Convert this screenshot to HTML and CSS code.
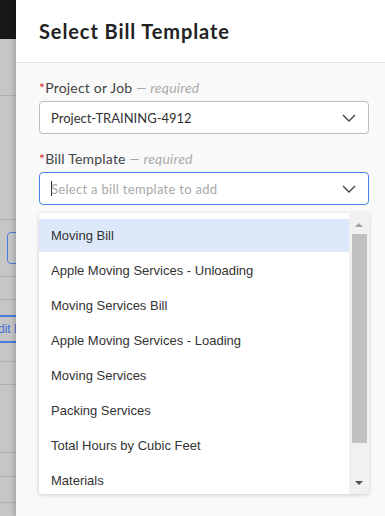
FILE: index.html
```html
<!DOCTYPE html>
<html lang="en">
<head>
  <title>Select Bill Template</title>
  <link rel="stylesheet" href="styles.css">
</head>
<body>
  <div class="backdrop">
    <div class="bd-top"></div>
    <div class="bd-row" style="height:57px"></div>
    <div class="bd-row" style="height:124px"></div>
    <div class="bd-row bd-btn-row" style="height:57px"><span class="bd-btn"></span></div>
    <div class="bd-row" style="height:23px"></div>
    <div class="bd-row bd-edit-row" style="height:62px"><span class="bd-edit">dit B</span></div>
    <div class="bd-row" style="height:23px"></div>
    <div class="bd-row" style="height:68px"></div>
    <div class="bd-row" style="height:24px"></div>
    <div class="bd-row" style="height:26px"></div>
  </div>

  <div class="modal">
    <div class="modal-header">
      <h2>Select Bill Template</h2>
    </div>
    <div class="modal-body">
      <div class="form-group">
        <label><span class="req">*</span>Project or Job <span class="hint">— required</span></label>
        <div class="select">
          <span class="value">Project-TRAINING-4912</span>
          <svg class="chevron" width="14" height="8" viewBox="0 0 14 8"><path d="M1 1l6 6 6-6" fill="none" stroke="#444" stroke-width="1.4"/></svg>
        </div>
      </div>
      <div class="form-group">
        <label><span class="req">*</span>Bill Template <span class="hint">— required</span></label>
        <div class="select focused">
          <span class="caret"></span>
          <span class="placeholder">Select a bill template to add</span>
          <svg class="chevron" width="14" height="8" viewBox="0 0 14 8"><path d="M1 1l6 6 6-6" fill="none" stroke="#444" stroke-width="1.4"/></svg>
        </div>
      </div>
      <div class="dropdown">
        <ul class="options">
          <li class="active">Moving Bill</li>
          <li>Apple Moving Services - Unloading</li>
          <li>Moving Services Bill</li>
          <li>Apple Moving Services - Loading</li>
          <li>Moving Services</li>
          <li>Packing Services</li>
          <li>Total Hours by Cubic Feet</li>
          <li>Materials</li>
        </ul>
        <div class="scrollbar">
          <span class="arrow up"></span>
          <div class="track"><div class="thumb"></div></div>
          <span class="arrow down"></span>
        </div>
      </div>
    </div>
  </div>
</body>
</html>
```

FILE: styles.css
```css
body {
  margin: 0;
  padding: 0;
  display: flex;
  width: 385px;
  height: 516px;
  overflow: hidden;
  font-family: Lato, "Noto Sans", sans-serif;
  color: #333;
}

/* fond de la page derrière le panneau */
.backdrop {
  width: 16px;
  flex: none;
  background-color: #c6c6c6;
  display: flex;
  flex-direction: column;
  overflow: hidden;
}
.bd-top {
  height: 39px;
  background-color: #181818;
}
.bd-row {
  border-bottom: 1px solid #b1b1b1;
  box-sizing: border-box;
  position: relative;
}
.bd-btn {
  position: absolute;
  left: 7px;
  top: 12px;
  width: 30px;
  height: 30px;
  border: 1px solid #4a7ddb;
  border-radius: 4px;
}
.bd-edit {
  position: absolute;
  left: -6px;
  top: 15px;
  height: 24px;
  line-height: 24px;
  padding: 0 4px;
  border-top: 2px solid #4a7ddb;
  border-bottom: 2px solid #4a7ddb;
  color: #3c6fd0;
  font-family: "Liberation Sans", Arial, sans-serif;
  font-size: 12px;
  white-space: nowrap;
}

/* panneau */
.modal {
  flex: 1;
  background-color: #f9f9f9;
  box-shadow: -2px 0 5px rgba(0, 0, 0, 0.18);
  position: relative;
}
.modal-header {
  height: 62px;
  background-color: #fff;
  border-bottom: 1px solid #e2e2e2;
  padding-left: 23px;
  display: flex;
  align-items: center;
}
.modal-header h2 {
  margin: 0;
  font-size: 20px;
  font-weight: 700;
  color: #222;
  letter-spacing: 0.9px;
}
.modal-body {
  padding: 0 16px 0 23px;
}
.form-group {
  display: flex;
  flex-direction: column;
}
label {
  display: block;
  margin-top: 16px;
  height: 18px;
  line-height: 18px;
  font-size: 14px;
  letter-spacing: 0.2px;
  color: #444;
}
.req {
  color: #d9262c;
}
.hint {
  color: #aaa;
  font-style: italic;
}
.select {
  margin-top: 4px;
  height: 33px;
  box-sizing: border-box;
  border: 1px solid #bdbdbd;
  border-radius: 4px;
  background-color: #fff;
  display: flex;
  align-items: center;
  padding: 0 12px 0 11px;
  font-size: 13px;
  color: #333;
}
.select.focused {
  border-color: #4a80e8;
}
.select .value, .select .placeholder {
  flex: 1;
}
.placeholder {
  color: #a9a9a9;
  letter-spacing: 0.3px;
}
.caret {
  width: 1px;
  height: 15px;
  background-color: #333;
  margin-right: -1px;
}
.chevron {
  flex: none;
}

/* liste déroulante */
.dropdown {
  margin-top: 8px;
  height: 281px;
  background-color: #fff;
  border-radius: 3px;
  box-shadow: 0 1px 4px rgba(0, 0, 0, 0.18);
  display: flex;
  overflow: hidden;
}
.options {
  flex: 1;
  list-style: none;
  margin: 0;
  padding: 6px 0 0;
  font-family: "Liberation Sans", Arial, sans-serif;
  font-size: 13px;
  color: #333;
}
.options li {
  height: 33px;
  line-height: 34px;
  margin-bottom: 2px;
  padding-left: 12px;
  white-space: nowrap;
}
.options li.active {
  background-color: #dde9fa;
}
.scrollbar {
  width: 20px;
  flex: none;
  background-color: #f1f1f1;
  display: flex;
  flex-direction: column;
  align-items: center;
}
.arrow {
  width: 0;
  height: 0;
  border-left: 4px solid transparent;
  border-right: 4px solid transparent;
  margin: 10px 0 7px;
}
.arrow.up {
  border-bottom: 4px solid #a3a3a3;
}
.arrow.down {
  border-top: 4px solid #505050;
  margin: 0 0 9px;
}
.track {
  flex: 1;
  width: 15px;
}
.thumb {
  height: 209px;
  background-color: #c1c1c1;
}
```
